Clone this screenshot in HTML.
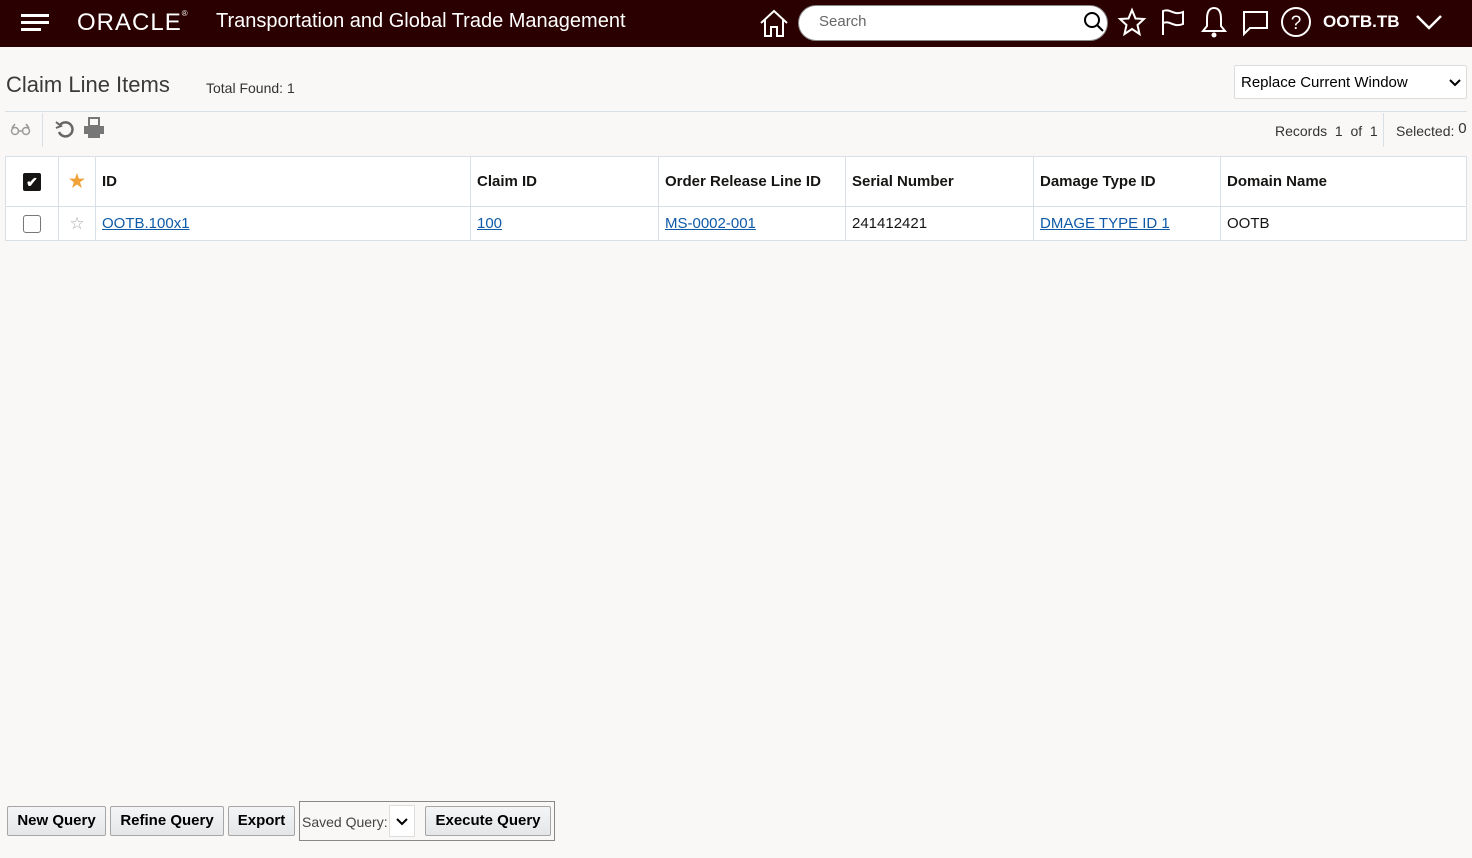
<!DOCTYPE html>
<html><head><meta charset="utf-8"><style>
*{box-sizing:border-box}
body{margin:0;width:1472px;height:858px;background:#f9f8f6;font-family:"Liberation Sans",sans-serif;position:relative;overflow:hidden}
.top{position:absolute;left:0;top:0;width:1472px;height:47px;background:#2b0000;color:#fff}
.abs{position:absolute}
.hdr{border-collapse:collapse;position:absolute;left:5px;top:156px;table-layout:fixed;background:#fff}
.hdr td{border:1px solid #d8dfe7;padding:0 6px;font-size:15px;white-space:nowrap}
.hdr tr.h td{height:50px;font-weight:bold;color:#161513}
.hdr tr.r td{height:34px;color:#161513}
a{color:#0e5aa7}
.btn{position:absolute;top:806px;height:30px;border:1px solid #a6a6a6;border-radius:2px;background:linear-gradient(#f4f5f6,#e4e6e8);font-weight:bold;font-size:15px;line-height:28px;text-align:center;color:#000}
</style></head><body>
<div class="top">
 <div class="abs" style="left:21px;top:14px;width:28px;height:3px;background:#fff"></div>
 <div class="abs" style="left:21px;top:21px;width:28px;height:3px;background:#fff"></div>
 <div class="abs" style="left:21px;top:28px;width:20px;height:3px;background:#fff"></div>
 <div class="abs" style="left:77px;top:9px;font-size:24px;letter-spacing:1px;font-weight:normal">ORACLE<span style="font-size:8px;vertical-align:top">®</span></div>
 <div class="abs" style="left:216px;top:10px;font-size:20px">Transportation and Global Trade Management</div>
 <svg class="abs" style="left:758px;top:8px" width="32" height="30" viewBox="0 0 32 30" fill="none" stroke="#fff" stroke-width="2"><path d="M3 15 L16 3 L29 15 M7 12 V28 H13 V19 H19 V28 H25 V12"/></svg>
 <div class="abs" style="left:798px;top:5px;width:310px;height:36px;border-radius:18px;background:#fff;border:1px solid #888"></div>
 <div class="abs" style="left:819px;top:13px;font-size:15px;color:#666">Search</div>
 <svg class="abs" style="left:1082px;top:9px" width="24" height="26" viewBox="0 0 24 26" fill="none" stroke="#000" stroke-width="2"><circle cx="10" cy="11" r="7"/><path d="M15 16 L21 22"/></svg>
 <svg class="abs" style="left:1117px;top:7px" width="30" height="30" viewBox="0 0 30 30" fill="none" stroke="#fff" stroke-width="2"><path d="M15 3 L18.5 11.5 L27 12 L20.5 18 L22.5 27 L15 22 L7.5 27 L9.5 18 L3 12 L11.5 11.5 Z"/></svg>
 <svg class="abs" style="left:1158px;top:7px" width="30" height="30" viewBox="0 0 30 30" fill="none" stroke="#fff" stroke-width="2"><path d="M5 28 V4 C12 1 16 9 25 5 V17 C16 21 12 13 5 16"/></svg>
 <svg class="abs" style="left:1199px;top:5px" width="30" height="34" viewBox="0 0 30 34" fill="none" stroke="#fff" stroke-width="2"><path d="M15 3 C9 3 8 9 8 14 V21 L4 26 H26 L22 21 V14 C22 9 21 3 15 3 Z"/><circle cx="15" cy="30" r="1.5" fill="#fff"/></svg>
 <svg class="abs" style="left:1240px;top:8px" width="30" height="30" viewBox="0 0 30 30" fill="none" stroke="#fff" stroke-width="2"><path d="M3 4 H27 V20 H10 L4 26 V4"/></svg>
 <svg class="abs" style="left:1280px;top:6px" width="32" height="32" viewBox="0 0 32 32" fill="none" stroke="#fff" stroke-width="2"><circle cx="16" cy="16" r="14"/><text x="16" y="23" text-anchor="middle" fill="#fff" stroke="none" font-size="19" font-family="Liberation Sans">?</text></svg>
 <div class="abs" style="left:1323px;top:12px;font-size:17px;font-weight:bold">OOTB.TB</div>
 <svg class="abs" style="left:1414px;top:12px" width="30" height="20" viewBox="0 0 30 20" fill="none" stroke="#fff" stroke-width="2.5"><path d="M3 4 L15 16 L27 4"/></svg>
</div>
<div class="abs" style="left:6px;top:72px;font-size:22px;color:#3a3a3a">Claim Line Items</div>
<div class="abs" style="left:206px;top:80px;font-size:14px;color:#333">Total Found: 1</div>
<div class="abs" style="left:1234px;top:65px;width:233px;height:34px;background:#fff;border:1px solid #dcdcdc;border-radius:2px;font-size:15px;padding:8px 6px;color:#000">Replace Current Window<svg style="position:absolute;right:5px;top:12px" width="12" height="10" viewBox="0 0 12 10" fill="none" stroke="#000" stroke-width="2"><path d="M1 2 L6 7 L11 2"/></svg></div>
<div class="abs" style="left:5px;top:111px;width:1462px;height:1px;background:#d8dfe7"></div>
<div class="abs" style="left:42px;top:113px;width:1px;height:34px;background:#d8dfe7"></div>
<div class="abs" style="left:1383px;top:113px;width:1px;height:34px;background:#d8dfe7"></div>
<svg class="abs" style="left:10px;top:122px" width="22" height="14" viewBox="0 0 22 14" fill="none" stroke="#999" stroke-width="1.5"><circle cx="5" cy="9" r="3.5"/><circle cx="16" cy="9" r="3.5"/><path d="M8.5 9 H12.5 M2 6 L5 2 M19 6 L16 2"/></svg>
<svg class="abs" style="left:54px;top:119px" width="22" height="20" viewBox="0 0 22 20" fill="none" stroke="#666" stroke-width="2.5"><path d="M6 6 A7 7 0 1 1 5 13"/><path d="M2 3 L7 7 L2 9" stroke-width="2"/></svg>
<svg class="abs" style="left:83px;top:117px" width="22" height="22" viewBox="0 0 22 22" fill="#777"><rect x="6" y="1" width="10" height="8" fill="none" stroke="#777" stroke-width="2"/><rect x="1" y="9" width="20" height="8"/><rect x="5" y="17" width="12" height="4"/></svg>
<div class="abs" style="left:1275px;top:123px;font-size:14px;color:#333">Records&nbsp; 1&nbsp; of&nbsp; 1</div>
<div class="abs" style="left:1396px;top:123px;font-size:14px;color:#333">Selected: <span style="font-size:15px;position:relative;top:-3px">0</span></div>
<table class="hdr">
<colgroup><col style="width:53px"><col style="width:37px"><col style="width:375px"><col style="width:188px"><col style="width:187px"><col style="width:188px"><col style="width:187px"><col style="width:246px"></colgroup>
<tr class="h"><td style="text-align:center"><span style="display:inline-block;width:18px;height:18px;background:#161513;border-radius:2px;color:#fff;font-size:14px;line-height:18px">✔</span></td><td style="text-align:center;color:#f0a137;font-size:18px">★</td><td>ID</td><td>Claim ID</td><td>Order Release Line ID</td><td>Serial Number</td><td>Damage Type ID</td><td>Domain Name</td></tr>
<tr class="r"><td style="text-align:center"><span style="display:inline-block;width:18px;height:18px;border:1.5px solid #777;border-radius:3px;vertical-align:middle"></span></td><td style="text-align:center;color:#aaa;font-size:17px">☆</td><td><a href="#">OOTB.100x1</a></td><td><a href="#">100</a></td><td><a href="#">MS-0002-001</a></td><td>241412421</td><td><a href="#">DMAGE TYPE ID 1</a></td><td>OOTB</td></tr>
</table>
<div class="btn" style="left:7px;width:99px">New Query</div>
<div class="btn" style="left:110px;width:114px">Refine Query</div>
<div class="btn" style="left:228px;width:67px">Export</div>
<div class="abs" style="left:299px;top:801px;width:256px;height:40px;border:1px solid #888"></div>
<div class="abs" style="left:302px;top:814px;font-size:14px;color:#444">Saved Query:</div>
<div class="abs" style="left:389px;top:805px;width:26px;height:32px;background:#fff;border:1px solid #ddd"><svg style="position:absolute;left:6px;top:12px" width="12" height="9" viewBox="0 0 12 9" fill="none" stroke="#000" stroke-width="2"><path d="M1 1 L6 6 L11 1"/></svg></div>
<div class="btn" style="left:425px;width:126px">Execute Query</div>
</body></html>
